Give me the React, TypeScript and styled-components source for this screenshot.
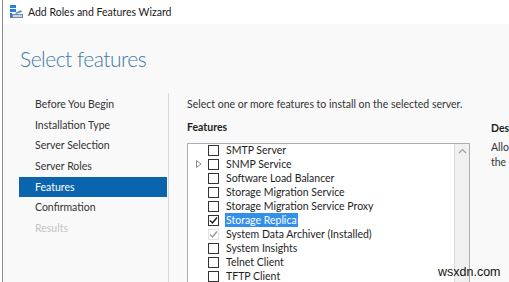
import React from 'react';
import styled, { createGlobalStyle } from 'styled-components';

const FONT = 'Lato, "Open Sans", "Liberation Sans", sans-serif';

const GlobalStyle = createGlobalStyle`
  html, body {
    margin: 0;
    padding: 0;
    background: #ffffff;
  }
  body {
    font-family: ${FONT};
    -webkit-font-smoothing: antialiased;
  }
`;

const Window = styled.div`
  position: relative;
  width: 507px;
  height: 282px;
  margin-left: 2px;
  border-left: 1px solid #8c8c8c;
  overflow: hidden;
  display: flex;
  flex-direction: column;
  background: #f9f9f9;
`;

const TitleBar = styled.div`
  height: 24px;
  flex-shrink: 0;
  display: flex;
  align-items: center;
  gap: 4px;
  padding-left: 6px;
  background: #ffffff;
  font-size: 10.5px;
  color: #1a1a1a;
`;

const Header = styled.div`
  height: 69px;
  padding-left: 17px;
  display: flex;
  align-items: center;
`;

const Heading = styled.h1`
  margin: 0;
  font-size: 21px;
  font-weight: 300;
  letter-spacing: -0.5px;
  color: #3f7aa3;
`;

const Main = styled.div`
  flex: 1;
  display: flex;
  min-height: 0;
`;

const Nav = styled.ul`
  list-style: none;
  margin: 1px 0 0 16px;
  padding: 0;
  width: 148px;
`;

const NavItem = styled.li<{ active?: boolean; disabled?: boolean }>`
  height: 20.7px;
  line-height: 20.7px;
  padding-left: 16px;
  font-size: 10.5px;
  background: ${(p) => (p.active ? '#0b64ae' : 'transparent')};
  color: ${(p) => (p.active ? '#ffffff' : p.disabled ? '#c4c4c4' : '#333333')};
`;

const Divider = styled.div`
  width: 1px;
  background: #dadada;
  margin-left: 1px;
`;

const Content = styled.div`
  flex: 1;
  display: flex;
  padding-left: 18px;
  min-width: 0;
`;

const Column = styled.div`
  width: 283px;
  flex-shrink: 0;
  display: flex;
  flex-direction: column;
`;

const Intro = styled.div`
  font-size: 10.5px;
  color: #333333;
  height: 20px;
  line-height: 20px;
  margin-top: 1px;
  white-space: nowrap;
`;

const SectionLabel = styled.div`
  margin-top: 3px;
  font-size: 10.5px;
  font-weight: 700;
  color: #1e1e1e;
  height: 20px;
  line-height: 20px;
  white-space: nowrap;
`;

const ListBox = styled.div`
  margin-top: 6px;
  flex: 1;
  display: flex;
  border: 1px solid #abadb3;
  border-bottom: none;
  background: #ffffff;
  overflow: hidden;
`;

const Rows = styled.div`
  flex: 1;
  margin-top: -1px;
`;

const Row = styled.div`
  height: 14px;
  display: flex;
  align-items: center;
  font-size: 10.5px;
  color: #1e1e1e;
  white-space: nowrap;
`;

const Expander = styled.div`
  width: 18px;
  display: flex;
  justify-content: center;
  padding-left: 2px;
`;

const Check = styled.div<{ checked?: boolean; dim?: boolean }>`
  width: 11px;
  height: 11px;
  box-sizing: border-box;
  border: 1px solid ${(p) => (p.dim ? (p.checked ? '#e2e2e2' : '#b8b8b8') : '#333333')};
  background: #ffffff;
  display: flex;
  align-items: center;
  justify-content: center;
  flex-shrink: 0;
`;

const Label = styled.span<{ selected?: boolean }>`
  margin-left: 6px;
  padding: 0 1px;
  line-height: 14px;
  background: ${(p) => (p.selected ? '#3390ea' : 'transparent')};
  color: ${(p) => (p.selected ? '#ffffff' : '#1e1e1e')};
`;

const ScrollBar = styled.div`
  width: 14px;
  border-left: 1px solid #dcdcdc;
  background: #f0f0f0;
  display: flex;
  justify-content: center;
  padding-top: 4px;
`;

const Description = styled.div`
  padding-left: 21px;
  display: flex;
  flex-direction: column;
  font-size: 10.5px;
  color: #333333;
  white-space: nowrap;
`;

const DescTitle = styled.div`
  margin-top: 25px;
  height: 20px;
  line-height: 20px;
  font-weight: 700;
  color: #1e1e1e;
`;

const DescText = styled.div`
  margin-top: 2px;
  line-height: 14.5px;
`;

const Watermark = styled.div`
  position: absolute;
  left: 435px;
  top: 265px;
  font-family: "Liberation Sans", Arial, sans-serif;
  font-size: 12.5px;
  color: #111111;
`;

const WizardIcon = () => (
  <svg width="15" height="14" viewBox="0 0 15 14">
    <rect x="1" y="0" width="6" height="3" fill="#2f7fd0" />
    <rect x="1" y="4" width="6" height="3" fill="#2f7fd0" />
    <rect x="1" y="8" width="2" height="5" fill="#2f7fd0" />
    <rect x="3" y="9" width="11" height="4" fill="#7a8a99" />
    <rect x="4" y="10" width="9" height="2" fill="#c9d6e3" />
    <path d="M6 8 L12 5 L13 7 L7 9 Z" fill="#4a96de" />
  </svg>
);

const CheckMark = ({ color }: { color: string }) => (
  <svg width="9" height="9" viewBox="0 0 9 9">
    <path d="M1 4.5 L3.5 7 L8 1.5" fill="none" stroke={color} strokeWidth="1.5" />
  </svg>
);

const Triangle = () => (
  <svg width="6" height="8" viewBox="0 0 6 8">
    <path d="M0.5 0.5 L5 4 L0.5 7.5 Z" fill="none" stroke="#8a8a8a" strokeWidth="1" />
  </svg>
);

const UpArrow = () => (
  <svg width="9" height="6" viewBox="0 0 9 6">
    <path d="M1 5 L4.5 1.5 L8 5" fill="none" stroke="#a0a0a0" strokeWidth="1.2" />
  </svg>
);

interface Feature {
  name: string;
  expandable?: boolean;
  checked?: boolean;
  dim?: boolean;
  selected?: boolean;
}

const steps = [
  'Before You Begin',
  'Installation Type',
  'Server Selection',
  'Server Roles',
  'Features',
  'Confirmation',
  'Results',
];

const features: Feature[] = [
  { name: 'SMTP Server' },
  { name: 'SNMP Service', expandable: true },
  { name: 'Software Load Balancer' },
  { name: 'Storage Migration Service' },
  { name: 'Storage Migration Service Proxy' },
  { name: 'Storage Replica', checked: true, selected: true },
  { name: 'System Data Archiver (Installed)', checked: true, dim: true },
  { name: 'System Insights' },
  { name: 'Telnet Client' },
  { name: 'TFTP Client' },
];

const App: React.FC = () => (
  <>
    <GlobalStyle />
    <Window>
      <TitleBar>
        <WizardIcon />
        <span>Add Roles and Features Wizard</span>
      </TitleBar>
      <Header>
        <Heading>Select features</Heading>
      </Header>
      <Main>
        <Nav>
          {steps.map((step) => (
            <NavItem key={step} active={step === 'Features'} disabled={step === 'Results'}>
              {step}
            </NavItem>
          ))}
        </Nav>
        <Divider />
        <Content>
          <Column>
            <Intro>Select one or more features to install on the selected server.</Intro>
            <SectionLabel>Features</SectionLabel>
            <ListBox>
              <Rows>
                {features.map((f) => (
                  <Row key={f.name}>
                    <Expander>{f.expandable && <Triangle />}</Expander>
                    <Check checked={f.checked} dim={f.dim}>
                      {f.checked && <CheckMark color={f.dim ? '#9a9a9a' : '#1e1e1e'} />}
                    </Check>
                    <Label selected={f.selected}>{f.name}</Label>
                  </Row>
                ))}
              </Rows>
              <ScrollBar>
                <UpArrow />
              </ScrollBar>
            </ListBox>
          </Column>
          <Description>
            <DescTitle>Description</DescTitle>
            <DescText>
              Allows replication
              <br />
              the data
            </DescText>
          </Description>
        </Content>
      </Main>
      <Watermark>wsxdn.com</Watermark>
    </Window>
  </>
);

export default App;
